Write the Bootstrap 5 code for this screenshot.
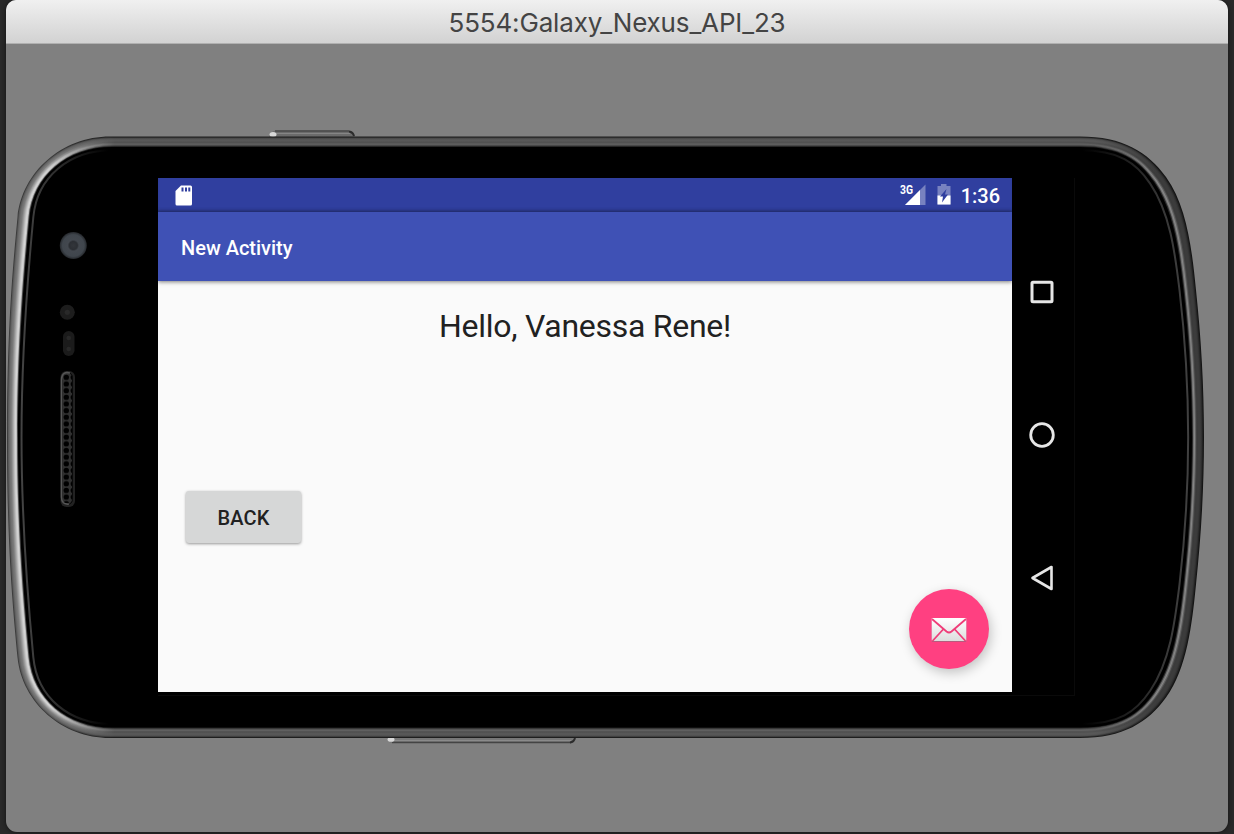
<!DOCTYPE html>
<html lang="en">
<head>
<meta charset="utf-8">
<title>5554:Galaxy_Nexus_API_23</title>
<link href="https://cdn.jsdelivr.net/npm/bootstrap@5.3.0/dist/css/bootstrap.min.css" rel="stylesheet">
<style>
html,body{height:100%}
body{background:#292929;overflow:hidden;font-family:Roboto,sans-serif}
.emu{height:832px;margin:0 6px;background:#808080;border-radius:11px;box-shadow:0 0 4px #111}
.titlebar{height:44px;background:linear-gradient(#f0f0f0,#d2d2d2);border-bottom:1px solid #b0b0b0;font:26px/46px Inter,sans-serif;color:#444;border-radius:10px 10px 0 0}
.titlebar span{white-space:nowrap}
.stage{height:788px;padding:134px 0 0 152px}
.shell{left:-6px;top:-44px;pointer-events:none}
.glass{width:917px;height:518px;border:1px solid #0a0a0a;border-left:0;border-top:0}
.screen{width:854px;height:514px;background:#fafafa}
.status{height:34px;background:#303f9f;box-shadow:inset 0 -3px 3px -1px #28357f;padding:0 12px 0 17px;color:#fff}
.signal{margin-right:6.5px}
.battery{margin-right:9.5px}
.clock{font-size:20px;font-weight:500;line-height:34px;padding-top:2px}
.appbar{height:69px;background:#3f51b5;color:#fff;font-size:20px;font-weight:500;line-height:72px;padding-left:23px;box-shadow:0 1px 4px rgba(0,0,0,.5)}
.hello{font-size:32px;line-height:38px;color:#212121;padding-top:26px}
.btn-back{width:115px;height:52px;margin:146px 0 0 28px;border-radius:3px;background:#d6d7d7;color:#212121;font-size:20px;font-weight:500;line-height:55px;letter-spacing:.1px;padding:0;border:0;box-shadow:0 1px 3px rgba(0,0,0,.4)}
.fab{width:80px;height:80px;right:23px;bottom:23px;background:#ff4081;box-shadow:2px 4px 12px rgba(0,0,0,.22)}
.fab svg{margin-top:2px}
.keys{width:60px;padding:101px 0 102px}
</style>
</head>
<body>
<main class="emu">
  <header class="titlebar text-center"><span id="wintitle">5554:Galaxy_Nexus_API_23</span></header>
  <section class="stage position-relative">
    <svg class="shell position-absolute" width="1234" height="834" viewBox="0 0 1234 834" fill="none">
      <defs>
        <linearGradient id="ring" gradientUnits="userSpaceOnUse" x1="20" x2="1200" y1="0" y2="0"><stop stop-color="#444"/><stop offset=".025" stop-color="#333"/><stop offset=".075" stop-color="#000"/><stop offset=".9" stop-color="#000"/><stop offset=".97" stop-color="#383838"/><stop offset="1" stop-color="#444"/></linearGradient>
        <radialGradient id="lens"><stop stop-color="#33363b"/><stop offset=".3" stop-color="#2c2f34"/><stop offset=".42" stop-color="#43484f"/><stop offset=".8" stop-color="#40464d"/><stop offset="1" stop-color="#25282c"/></radialGradient>
        <pattern id="mesh" width="7" height="6.65" x="63" y="374" patternUnits="userSpaceOnUse"><rect width="7" height="6.65" fill="#303030"/><circle cx="3.3" cy="3.3" r="2.7" fill="#000"/></pattern>
      </defs>
      <path d="M269 137Q271 130.500 276 130.500H349Q354 130.500 355 137Z" fill="#6b6b6b"/>
      <path d="M275 131H349" stroke="#484848" stroke-width="1.300"/><path d="M276 133.500H350" stroke="#858585"/><path d="M349 131.500Q353 132 354 136" stroke="#2c2c2c" stroke-width="2"/><ellipse cx="273" cy="134.500" rx="3.500" ry="2.500" fill="#d8d8d8"/>
      <path d="M387 737Q388 743 392 743H571Q575 743 576 737Z" fill="#777"/>
      <path d="M392 742.500H571" stroke="#444" stroke-width="1.300"/><path d="M394 740.500H571" stroke="#8b8b8b"/><path d="M570 742.500Q574 742 575 738" stroke="#2c2c2c" stroke-width="2"/><ellipse cx="391" cy="739.500" rx="3.500" ry="2.300" fill="#d8d8d8"/>
      <g id="bezel"></g>
      <circle cx="73.300" cy="245.500" r="13.500" fill="url(#lens)"/>
      <circle cx="67.300" cy="312.300" r="7.500" fill="#1d1d1d"/><circle cx="67.300" cy="312.300" r="2.600" fill="#292929"/>
      <rect x="63" y="331" width="11.500" height="25" rx="5.700" fill="#1b1b1b"/><circle cx="68.700" cy="338" r="2.300" fill="#282828"/><circle cx="68.700" cy="349" r="2.300" fill="#282828"/>
      <rect x="60.500" y="371" width="14.500" height="136" rx="6" fill="#222"/>
      <rect x="62" y="372.500" width="10.500" height="132" rx="5" fill="url(#mesh)" stroke="#090909" stroke-width="1"/>
      <path d="M70 373Q61.500 371 61.500 380V497Q61.500 505 69 504" stroke="#555" stroke-width="1.600"/>
    </svg>
    <div class="glass d-flex position-relative">
      <div class="screen position-relative">
        <div class="status d-flex align-items-center">
          <svg width="18" height="21" viewBox="0 0 18 21"><path d="M6 .5H15.500Q17 .5 17 2V19Q17 20.500 15.500 20.500H2Q.5 20.500.5 19V6Z" fill="#fff"/><path d="M7.500 2.500V6.500M11 2.500V6.500M14.300 2.500V6.500" stroke="#303f9f" stroke-width="2"/></svg>
          <svg class="signal ms-auto" width="32" height="24" viewBox="0 0 32 24"><path d="M26.500 1.500V22H6Z" fill="#fff" opacity=".35"/><path d="M21 7V22H6Z" fill="#fff"/><text x="1" y="10.500" font-family="Roboto" font-size="12" font-weight="700" fill="#fff" textLength="13" lengthAdjust="spacingAndGlyphs">3G</text></svg>
          <svg class="battery" width="14" height="22" viewBox="0 0 14 22"><path d="M4 0H9.500V2H13.500V20.500H.5V2H4Z" fill="#fff" opacity=".35"/><path d="M.5 11.500H13.500V20.500H.5Z" fill="#fff"/><path d="M9.500 5L3 12.500H6L5 18.500L11 10.500H8Z" fill="#303f9f"/></svg>
          <span class="clock">1:36</span>
        </div>
        <div class="appbar"><span id="apptitle">New Activity</span></div>
        <div class="hello text-center"><span id="greeting">Hello, Vanessa Rene!</span></div>
        <button class="btn btn-back d-block">BACK</button>
        <button class="btn fab rounded-circle border-0 p-0 position-absolute d-flex align-items-center justify-content-center" aria-label="Mail">
          <svg width="36" height="26" viewBox="0 0 36 26"><defs><linearGradient id="env" x1="0" x2="0" y1="0" y2="1"><stop stop-color="#fff"/><stop offset="1" stop-color="#ddd"/></linearGradient></defs><rect x=".7" y="1.500" width="34.600" height="23.500" rx="1" fill="#b65b7e"/><rect x=".7" y="1" width="34.600" height="23" rx="1" fill="url(#env)"/><path d="M1 2L15.500 14.500Q18 16.500 20.500 14.500L35 2M1.500 24L12.500 12M34.500 24L23.500 12" fill="none" stroke="#ef3d79" stroke-width="1.800"/></svg>
        </button>
      </div>
      <nav class="keys d-flex flex-column justify-content-between align-items-center">
        <svg width="26" height="26" viewBox="0 0 26 26" fill="none" stroke="#e6e6e6" stroke-width="3"><rect x="3" y="3.300" width="20" height="19.500" rx="1"/></svg>
        <svg width="28" height="28" viewBox="0 0 28 28" fill="none" stroke="#e6e6e6" stroke-width="2.800"><circle cx="14" cy="14" r="11.300"/></svg>
        <svg width="26" height="28" viewBox="0 0 26 28" fill="none" stroke="#e6e6e6" stroke-width="2.600" stroke-linejoin="round"><path d="M22.500 2V24L3.500 13Z"/></svg>
      </nav>
    </div>
  </section>
</main>
<script src="https://cdn.jsdelivr.net/npm/bootstrap@5.3.0/dist/js/bootstrap.bundle.min.js"></script>
<script>
// The bezel is a stack of contours blended from the outer edge to the glass edge.
// Upper half as points; the lower half is its mirror around y = 437.2.
const outer=[[7,437],[7,330],[12.5,270],[17.5,217],[22,172],[62,136.5],[110,136.5],[1080,136.5],[1123,136.5],[1148,152],[1166,177],[1187,206],[1192,250],[1196,290],[1201,337],[1204,385],[1204,437]];
const inner=[[18,437],[18,350],[23.5,280],[29.5,217],[33.5,176],[67,147],[112,147],[1080,147],[1120,147],[1139,160],[1154,182],[1174,211],[1179,251],[1183.5,290],[1189,338],[1192,390],[1192,437]];
function contour(t){
  const p=outer.map((a,i)=>a.map((v,k)=>v+(inner[i][k]-v)*t));
  const m=p.map(([x,y])=>[x,874.4-y]).reverse();
  const curves=(q,starts)=>starts.map(i=>`C${q[i+1]} ${q[i+2]} ${q[i+3]}`).join('');
  return `M${p[0]}${curves(p,[0,3])}L${p[7]}${curves(p,[7,10,13])}L${m[0]}${curves(m,[0,3,6])}L${m[10]}${curves(m,[10,13])}Z`;
}
const shades=[[60,30,20],[90,58,35],[105,80,50],[115,86,58],[122,88,60],[140,86,60],[160,80,58],[182,84,66],[203,96,100],[215,90,135],[190,65,110],[70,30,40],[0,0,0]];
let defs='',paths='';
shades.forEach(([l,c,r],i)=>{
  const g=v=>`rgb(${v},${v},${v})`;
  defs+=`<linearGradient id="s${i}" gradientUnits="userSpaceOnUse" x1="7" x2="1204" y1="0" y2="0"><stop stop-color="${g(l)}"/><stop offset=".035" stop-color="${g(l)}"/><stop offset=".09" stop-color="${g(c)}"/><stop offset=".91" stop-color="${g(c)}"/><stop offset=".96" stop-color="${g(r)}"/></linearGradient>`;
  paths+=`<path d="${contour(i/12)}" fill="url(#s${i})"/>`;
});
paths+=`<path d="${contour(1.32)}" stroke="url(#ring)" stroke-width="2"/>`;
document.getElementById('bezel').innerHTML=`<defs>${defs}</defs>${paths}`;
document.fonts.ready.then(()=>{
  for(const [id,w] of [['wintitle',337],['apptitle',111.5],['greeting',292]]){
    const e=document.getElementById(id);
    e.style.letterSpacing=(w-e.getBoundingClientRect().width)/e.textContent.length+'px';
  }
});
</script>
</body>
</html>
